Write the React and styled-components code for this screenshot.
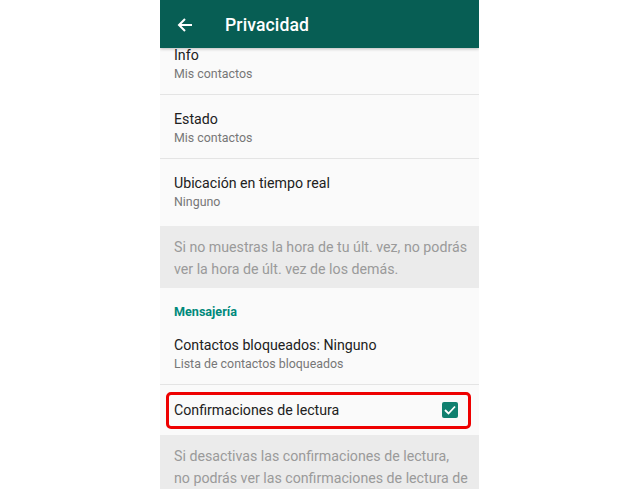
import React from 'react';
import styled, { createGlobalStyle } from 'styled-components';

const GlobalStyle = createGlobalStyle`
    html, body {
        margin: 0;
        padding: 0;
        background: #ffffff;
        font-family: Roboto, "Noto Sans", "Liberation Sans", sans-serif;
    }
`;

const Screen = styled.div`
    width: 319px;
    height: 489px;
    margin-left: 160px;
    background: #fafafa;
    overflow: hidden;
    display: flex;
    flex-direction: column;
`;

const Header = styled.header`
    position: relative;
    z-index: 2;
    flex: 0 0 48px;
    display: flex;
    align-items: center;
    padding-top: 2px;
    box-sizing: border-box;
    background: #075e54;
    box-shadow: 0 1px 3px rgba(0, 0, 0, 0.25);
    color: #fff;
`;

const Back = styled.div`
    width: 49px;
    display: flex;
    justify-content: center;
    margin-right: 16px;
`;

const HeaderTitle = styled.h1`
    margin: 0;
    font-size: 17.6px;
    font-weight: 500;
    letter-spacing: 0.1px;
`;

const List = styled.div`
    margin-top: -17px;
    display: flex;
    flex-direction: column;
`;

const Row = styled.div`
    position: relative;
    display: flex;
    align-items: ${(p) => (p.center ? 'center' : 'flex-start')};
    justify-content: space-between;
    height: ${(p) => p.height || 64}px;
    box-sizing: border-box;
    padding: ${(p) => (p.center ? '0 21px 0 14px' : '15px 21px 0 14px')};
    border-bottom: ${(p) => (p.divider ? '1px solid #e4e4e4' : 'none')};
    background: #fafafa;
`;

const Texts = styled.div`
    display: flex;
    flex-direction: column;
`;

const Title = styled.div`
    font-size: 14.2px;
    line-height: 19px;
    color: #212121;
`;

const Subtitle = styled.div`
    font-size: 12.4px;
    line-height: 18px;
    color: #777;
`;

const Note = styled.div`
    background: #ebebeb;
    padding: 10px 6px 8px 14px;
    font-size: 14.2px;
    line-height: 22px;
    color: #9a9a9a;
`;

const Section = styled.div`
    padding: 15px 14px 0;
    font-size: 12.6px;
    font-weight: 700;
    line-height: 18px;
    color: #00897b;
`;

const Check = styled.div`
    width: 16px;
    height: 16px;
    border-radius: 2px;
    background: #10806f;
    display: flex;
    align-items: center;
    justify-content: center;
`;

const Highlight = styled.div`
    position: absolute;
    left: 6px;
    right: 8px;
    top: 7px;
    bottom: 6px;
    border: 3px solid #ee0000;
    border-radius: 5px;
    pointer-events: none;
`;

const Item = ({ title, subtitle, divider = true, height }) => (
    <Row divider={divider} height={height}>
        <Texts>
            <Title>{title}</Title>
            {subtitle && <Subtitle>{subtitle}</Subtitle>}
        </Texts>
    </Row>
);

export default function App() {
    return (
        <>
            <GlobalStyle />
            <Screen>
                <Header>
                    <Back>
                        <svg width="16" height="16" viewBox="0 0 16 16" fill="none" stroke="#fff" strokeWidth="2">
                            <path d="M15 8H2M8 2L2 8l6 6" />
                        </svg>
                    </Back>
                    <HeaderTitle>Privacidad</HeaderTitle>
                </Header>
                <List>
                    <Item title="Info" subtitle="Mis contactos" />
                    <Item title="Estado" subtitle="Mis contactos" />
                    <Item title="Ubicación en tiempo real" subtitle="Ninguno" divider={false} height={67} />
                    <Note>
                        Si no muestras la hora de tu últ. vez, no podrás ver la hora de últ. vez de los demás.
                    </Note>
                    <Section>Mensajería</Section>
                    <Item title="Contactos bloqueados: Ninguno" subtitle="Lista de contactos bloqueados" />
                    <Row height={50} center>
                        <Title>Confirmaciones de lectura</Title>
                        <Check>
                            <svg width="12" height="10" viewBox="0 0 12 10" fill="none" stroke="#fff" strokeWidth="1.8">
                                <path d="M1 5l3.5 3.5L11 1.5" />
                            </svg>
                        </Check>
                        <Highlight />
                    </Row>
                    <Note>
                        Si desactivas las confirmaciones de lectura,
                        <br />
                        no podrás ver las confirmaciones de lectura de los demás.
                    </Note>
                </List>
            </Screen>
        </>
    );
}
